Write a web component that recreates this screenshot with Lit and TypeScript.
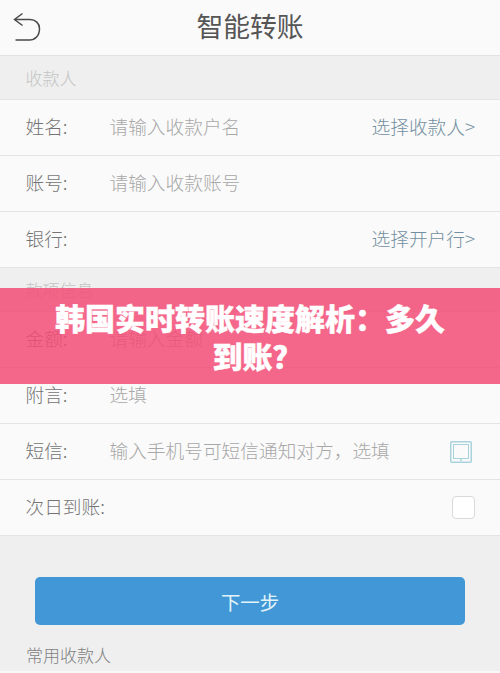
import { LitElement, html, css } from "lit";
import { customElement } from "lit/decorators.js";

@customElement("app-root")
export class AppRoot extends LitElement {
  static styles = css`
    :host {
      display: block;
      position: relative;
      width: 500px;
      height: 673px;
      overflow: hidden;
      background: #efeff0;
      font-family: "Noto Sans CJK SC", "Noto Sans", sans-serif;
      font-weight: 300;
      color: #7b7b7b;
    }
    .header {
      height: 55px;
      background: #fafafa;
      border-bottom: 1px solid #e2e2e2;
      display: flex;
      align-items: center;
      justify-content: center;
      position: relative;
    }
    .header h1 {
      margin: 0 0 2px;
      font-size: 26.8px;
      font-weight: 400;
      color: #555;
      line-height: 1;
    }
    .back {
      position: absolute;
      left: 13px;
      top: 12px;
      width: 28px;
      height: 30px;
    }
    .section {
      height: 43px;
      background: #efefef;
      border-bottom: 1px solid #e4e4e4;
      display: flex;
      align-items: center;
      padding-left: 25.5px;
      font-size: 17px;
      color: #c4c4c4;
    }
    .row {
      height: 55px;
      background: #fafafa;
      border-bottom: 1px solid #e4e4e4;
      display: flex;
      align-items: center;
      padding: 0 25px 0 25.5px;
      font-size: 18.7px;
    }
    .label {
      width: 84px;
      flex: none;
      color: #747474;
      margin-bottom: 4px;
    }
    .label.wide {
      width: auto;
    }
    .ph {
      flex: 1;
      color: #a8a8a8;
      margin-bottom: 4px;
    }
    .link {
      color: #7390a1;
      margin-bottom: 4px;
    }
    .phone {
      width: 22px;
      height: 22px;
      margin-right: 3px;
      flex: none;
    }
    .check {
      margin-left: auto;
      width: 23px;
      height: 23px;
      box-sizing: border-box;
      border: 1px solid #d9d9d9;
      border-radius: 4px;
      background: #fff;
    }
    .actions {
      padding: 41px 35px 0;
    }
    .btn {
      height: 48px;
      border-radius: 5px;
      background: #4297d6;
      color: #e2f4fa;
      display: flex;
      align-items: center;
      justify-content: center;
      font-size: 19.4px;
      font-weight: 400;
    }
    .foot {
      padding: 18px 26px 4px;
      font-size: 17px;
      color: #7f7f7f;
      line-height: 24px;
    }
    .next {
      height: 2px;
      background: #f8f8f8;
    }
    .banner {
      position: absolute;
      left: 0;
      right: 0;
      top: 288px;
      height: 96px;
      box-sizing: border-box;
      padding: 0 50px;
      display: flex;
      align-items: center;
      justify-content: center;
      text-align: center;
      background: rgba(243, 76, 118, 0.85);
      color: #fff;
      font-size: 30px;
      font-weight: 900;
      -webkit-text-stroke: 0.4px #fff;
      line-height: 38px;
    }
    .q {
      letter-spacing: -15px;
    }
  `;

  private row(label: string, ph: string, link = "") {
    return html`<div class="row">
      <span class="label">${label}</span>
      <span class="ph">${ph}</span>
      ${link ? html`<span class="link">${link}</span>` : ""}
    </div>`;
  }

  render() {
    return html`
      <div class="header">
        <svg class="back" viewBox="0 0 28 30" fill="none" stroke="#4a4a4a" stroke-width="1.5">
          <path d="M9.5 1.5 L1.5 7.5 L9.5 13.5" stroke-linejoin="miter" />
          <path d="M2 7.5 H17 C22.5 7.5 26.5 11.5 26.5 16.5 C26.5 24 22 28 16.5 28 H2.5" />
        </svg>
        <h1>智能转账</h1>
      </div>
      <div class="section">收款人</div>
      ${this.row("姓名:", "请输入收款户名", "选择收款人>")}
      ${this.row("账号:", "请输入收款账号")}
      ${this.row("银行:", "", "选择开户行>")}
      <div class="section">款项信息</div>
      ${this.row("金额:", "请输入金额")}
      ${this.row("附言:", "选填")}
      <div class="row">
        <span class="label">短信:</span>
        <span class="ph">输入手机号可短信通知对方，选填</span>
        <svg class="phone" viewBox="0 0 22 22" fill="none" stroke="#a9d3dc">
          <rect x="0.75" y="0.75" width="20.5" height="20.5" rx="1" stroke-width="1.5" />
          <rect x="3.5" y="3.5" width="15" height="14" stroke-width="1" />
          <path d="M11 18 V20" stroke-width="1.5" />
        </svg>
      </div>
      <div class="row">
        <span class="label wide">次日到账:</span>
        <span class="check"></span>
      </div>
      <div class="actions"><div class="btn">下一步</div></div>
      <div class="foot">常用收款人</div>
      <div class="next"></div>
      <div class="banner"><span>韩国实时转账速度解析：多久到账<span class="q">？</span></span></div>
    `;
  }
}
